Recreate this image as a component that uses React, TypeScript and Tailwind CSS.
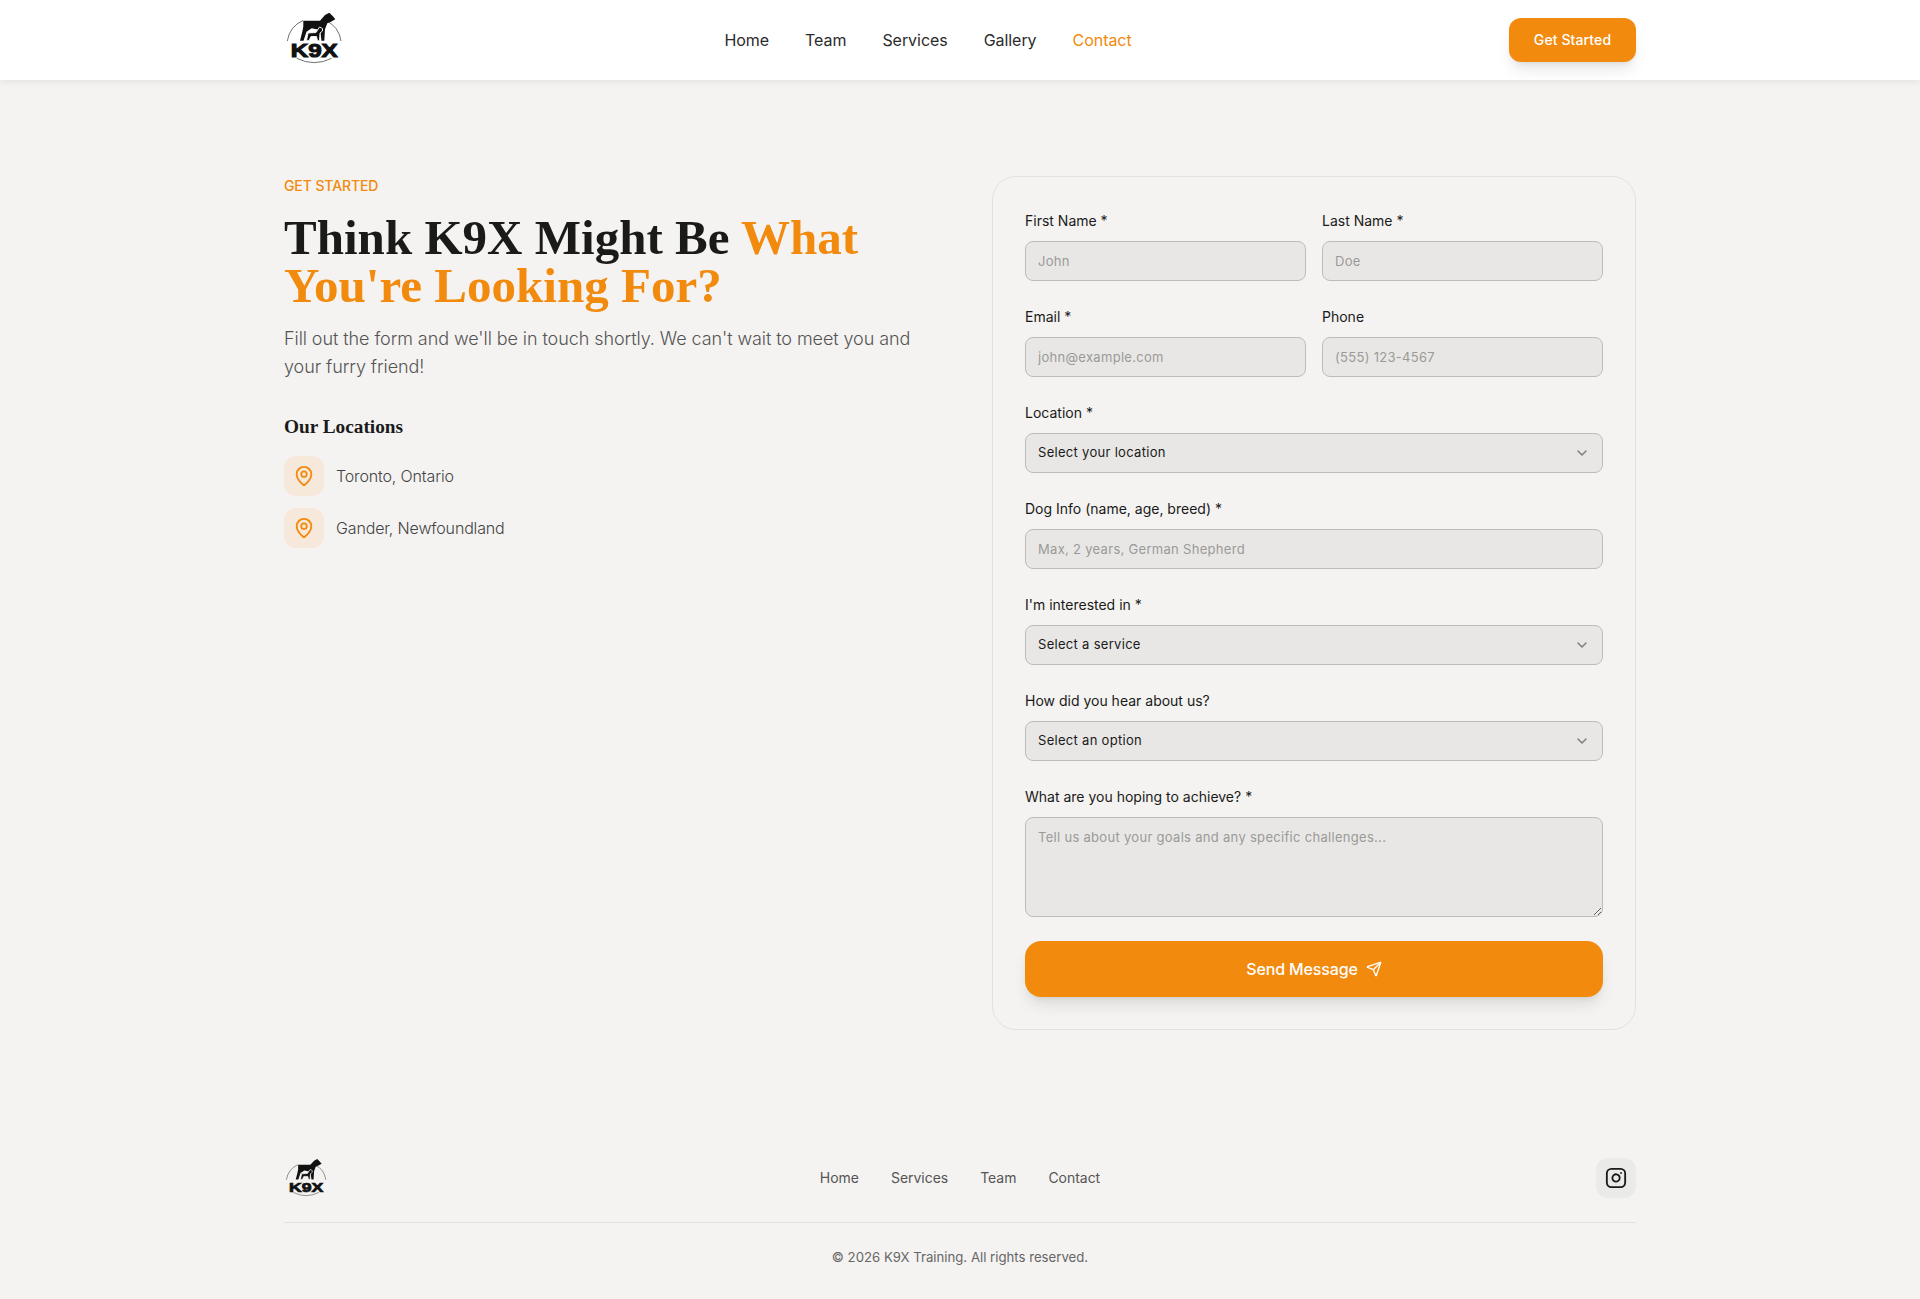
import { ChevronDown, MapPin, Send } from "lucide-react";

const sans = "font-['Inter','Liberation_Sans',sans-serif]";

const navLinks = ["Home", "Team", "Services", "Gallery", "Contact"];
const footerLinks = ["Home", "Services", "Team", "Contact"];
const locations = ["Toronto, Ontario", "Gander, Newfoundland"];

const inputClass =
  "w-full h-10 px-3 rounded-lg bg-[#e8e7e5] border border-[#bdbcb9] text-[13px] tracking-[0.3px] text-[#1a1a1a] placeholder:text-[#9a9a98] outline-none";

const Logo = ({ size }: { size: number }) => (
  <svg width={size} height={size} viewBox="0 0 60 60" className="shrink-0">
    <path d="M3.3 31 A27 27 0 0 1 19 10.5" fill="none" stroke="#333" strokeWidth="0.7" />
    <path d="M42 10.5 A27 27 0 0 1 57 31" fill="none" stroke="#333" strokeWidth="0.7" />
    <path d="M12.7 48.3 Q30 57 47.7 48.3" fill="none" stroke="#333" strokeWidth="0.7" />
    <path
      d="M19.3 10.7 L36 10.7 L41 5 L45.3 2.7 L48.7 6 L51.3 9.3 L47 11.7 L43.3 13.3 L41 19.3 L40.3 30.7 L37.5 30.7 L36 20 L27.7 18.3 L22.5 21.7 L19.5 30.7 L16 30.7 L18.3 21.7 L19.3 16.7 Z"
      fill="#111"
    />
    <path
      d="M24 23 L32 22.5 L35.5 17 L38.5 18.5 L38.5 21 L36 23 L35.5 30.7 L33.5 30.7 L32.5 26.5 L27 26.5 L25 30.7 L22.5 30.7 Z"
      fill="#111"
      stroke="#fff"
      strokeWidth="0.9"
    />
    <text
      x="6.7"
      y="47.2"
      fontFamily="Liberation Sans"
      fontWeight="700"
      fontSize="18"
      textLength="47"
      lengthAdjust="spacingAndGlyphs"
      fill="#111"
      stroke="#111"
      strokeWidth="1"
    >
      K9X
    </text>
  </svg>
);

const Field = ({ label, children }: { label: string; children: React.ReactNode }) => (
  <div>
    <label className="block mb-2 text-sm leading-6 text-[#1a1a1a]">{label}</label>
    {children}
  </div>
);

const Select = ({ text }: { text: string }) => (
  <div className={`${inputClass} flex items-center justify-between`}>
    <span>{text}</span>
    <ChevronDown size={16} className="text-[#777]" />
  </div>
);

export default function App() {
  return (
    <div className={`${sans} min-h-[1299px] bg-[#f4f3f1] text-[#1a1a1a]`}>
      <header className="h-20 bg-white shadow-[0_1px_8px_rgba(0,0,0,0.08)]">
        <div className="mx-auto max-w-[1400px] h-full px-6 flex items-center justify-between">
          <div className="w-[63px]">
            <Logo size={60} />
          </div>
          <nav className="flex items-center gap-9 text-base tracking-[-0.05px]">
            {navLinks.map((link) => (
              <a key={link} className={link === "Contact" ? "text-[#f28a0d]" : "text-[#2b2b2b]"}>
                {link}
              </a>
            ))}
          </nav>
          <button className="w-[127px] h-11 rounded-xl bg-[#f28a0d] text-white text-sm font-medium tracking-[0.1px] shadow-lg shadow-black/10">
            Get Started
          </button>
        </div>
      </header>

      <main className="mx-auto max-w-[1400px] px-6 pt-24 pb-24 grid grid-cols-2 gap-16 items-start">
        <div>
          <p className="text-sm leading-5 font-medium uppercase tracking-[-0.1px] text-[#f28a0d] mb-[18px]">
            Get Started
          </p>
          <h1 className="font-['Liberation_Serif',serif] font-bold text-[49px] leading-[48px] tracking-[0.02px] text-[#1a1a18] mb-[15px]">
            Think K9X Might Be <span className="text-[#f28a0d]">What You're Looking For?</span>
          </h1>
          <p className="text-lg leading-7 font-light tracking-[-0.08px] text-[#555] mb-8">
            Fill out the form and we'll be in touch shortly. We can't wait to meet you and your furry friend!
          </p>
          <h2 className="font-['Liberation_Serif',serif] font-bold text-[19.3px] leading-7 mb-[15px]">Our Locations</h2>
          <div className="flex flex-col gap-3">
            {locations.map((loc) => (
              <div key={loc} className="flex items-center gap-3">
                <div className="w-10 h-10 rounded-xl bg-[#f6e8da] flex items-center justify-center">
                  <MapPin size={22} className="text-[#f28a0d]" />
                </div>
                <span className="text-base font-light tracking-[-0.15px] text-[#444]">{loc}</span>
              </div>
            ))}
          </div>
        </div>

        <form className="rounded-3xl border border-[#e2e1df] p-8 flex flex-col gap-6 bg-[#f4f3f1]">
          <div className="grid grid-cols-2 gap-4">
            <Field label="First Name *">
              <input className={inputClass} placeholder="John" />
            </Field>
            <Field label="Last Name *">
              <input className={inputClass} placeholder="Doe" />
            </Field>
          </div>
          <div className="grid grid-cols-2 gap-4">
            <Field label="Email *">
              <input className={inputClass} placeholder="john@example.com" />
            </Field>
            <Field label="Phone">
              <input className={inputClass} placeholder="(555) 123-4567" />
            </Field>
          </div>
          <Field label="Location *">
            <Select text="Select your location" />
          </Field>
          <Field label="Dog Info (name, age, breed) *">
            <input className={inputClass} placeholder="Max, 2 years, German Shepherd" />
          </Field>
          <Field label="I'm interested in *">
            <Select text="Select a service" />
          </Field>
          <Field label="How did you hear about us?">
            <Select text="Select an option" />
          </Field>
          <Field label="What are you hoping to achieve? *">
            <textarea
              className={`${inputClass} h-[100px] py-2.5 block`}
              placeholder="Tell us about your goals and any specific challenges..."
            />
          </Field>
          <button
            type="button"
            className="h-14 rounded-2xl bg-[#f28a0d] text-white font-medium tracking-[-0.15px] flex items-center justify-center gap-2 shadow-lg shadow-black/10"
          >
            Send Message
            <Send size={16} />
          </button>
        </form>
      </main>

      <footer className="mx-auto max-w-[1400px] px-6 py-8">
        <div className="flex items-center justify-between pb-6 border-b border-[#e2e1df]">
          <div className="w-10 h-10 -mt-[2px]">
            <Logo size={44} />
          </div>
          <nav className="flex items-center gap-8 text-sm tracking-[-0.03px] text-[#555]">
            {footerLinks.map((link) => (
              <a key={link}>{link}</a>
            ))}
          </nav>
          <a className="w-10 h-10 rounded-xl bg-[#eaeae8] flex items-center justify-center">
            <svg width="22" height="22" viewBox="0 0 24 24" fill="none" stroke="#1a1a1a" strokeWidth="2" strokeLinecap="round" strokeLinejoin="round">
              <rect x="2" y="2" width="20" height="20" rx="5" ry="5" />
              <path d="M16 11.37A4 4 0 1 1 12.63 8 4 4 0 0 1 16 11.37z" />
              <line x1="17.5" y1="6.5" x2="17.51" y2="6.5" />
            </svg>
          </a>
        </div>
        <p className="pt-6 text-center text-[13.2px] leading-5 text-[#666]">© 2026 K9X Training. All rights reserved.</p>
      </footer>
    </div>
  );
}
